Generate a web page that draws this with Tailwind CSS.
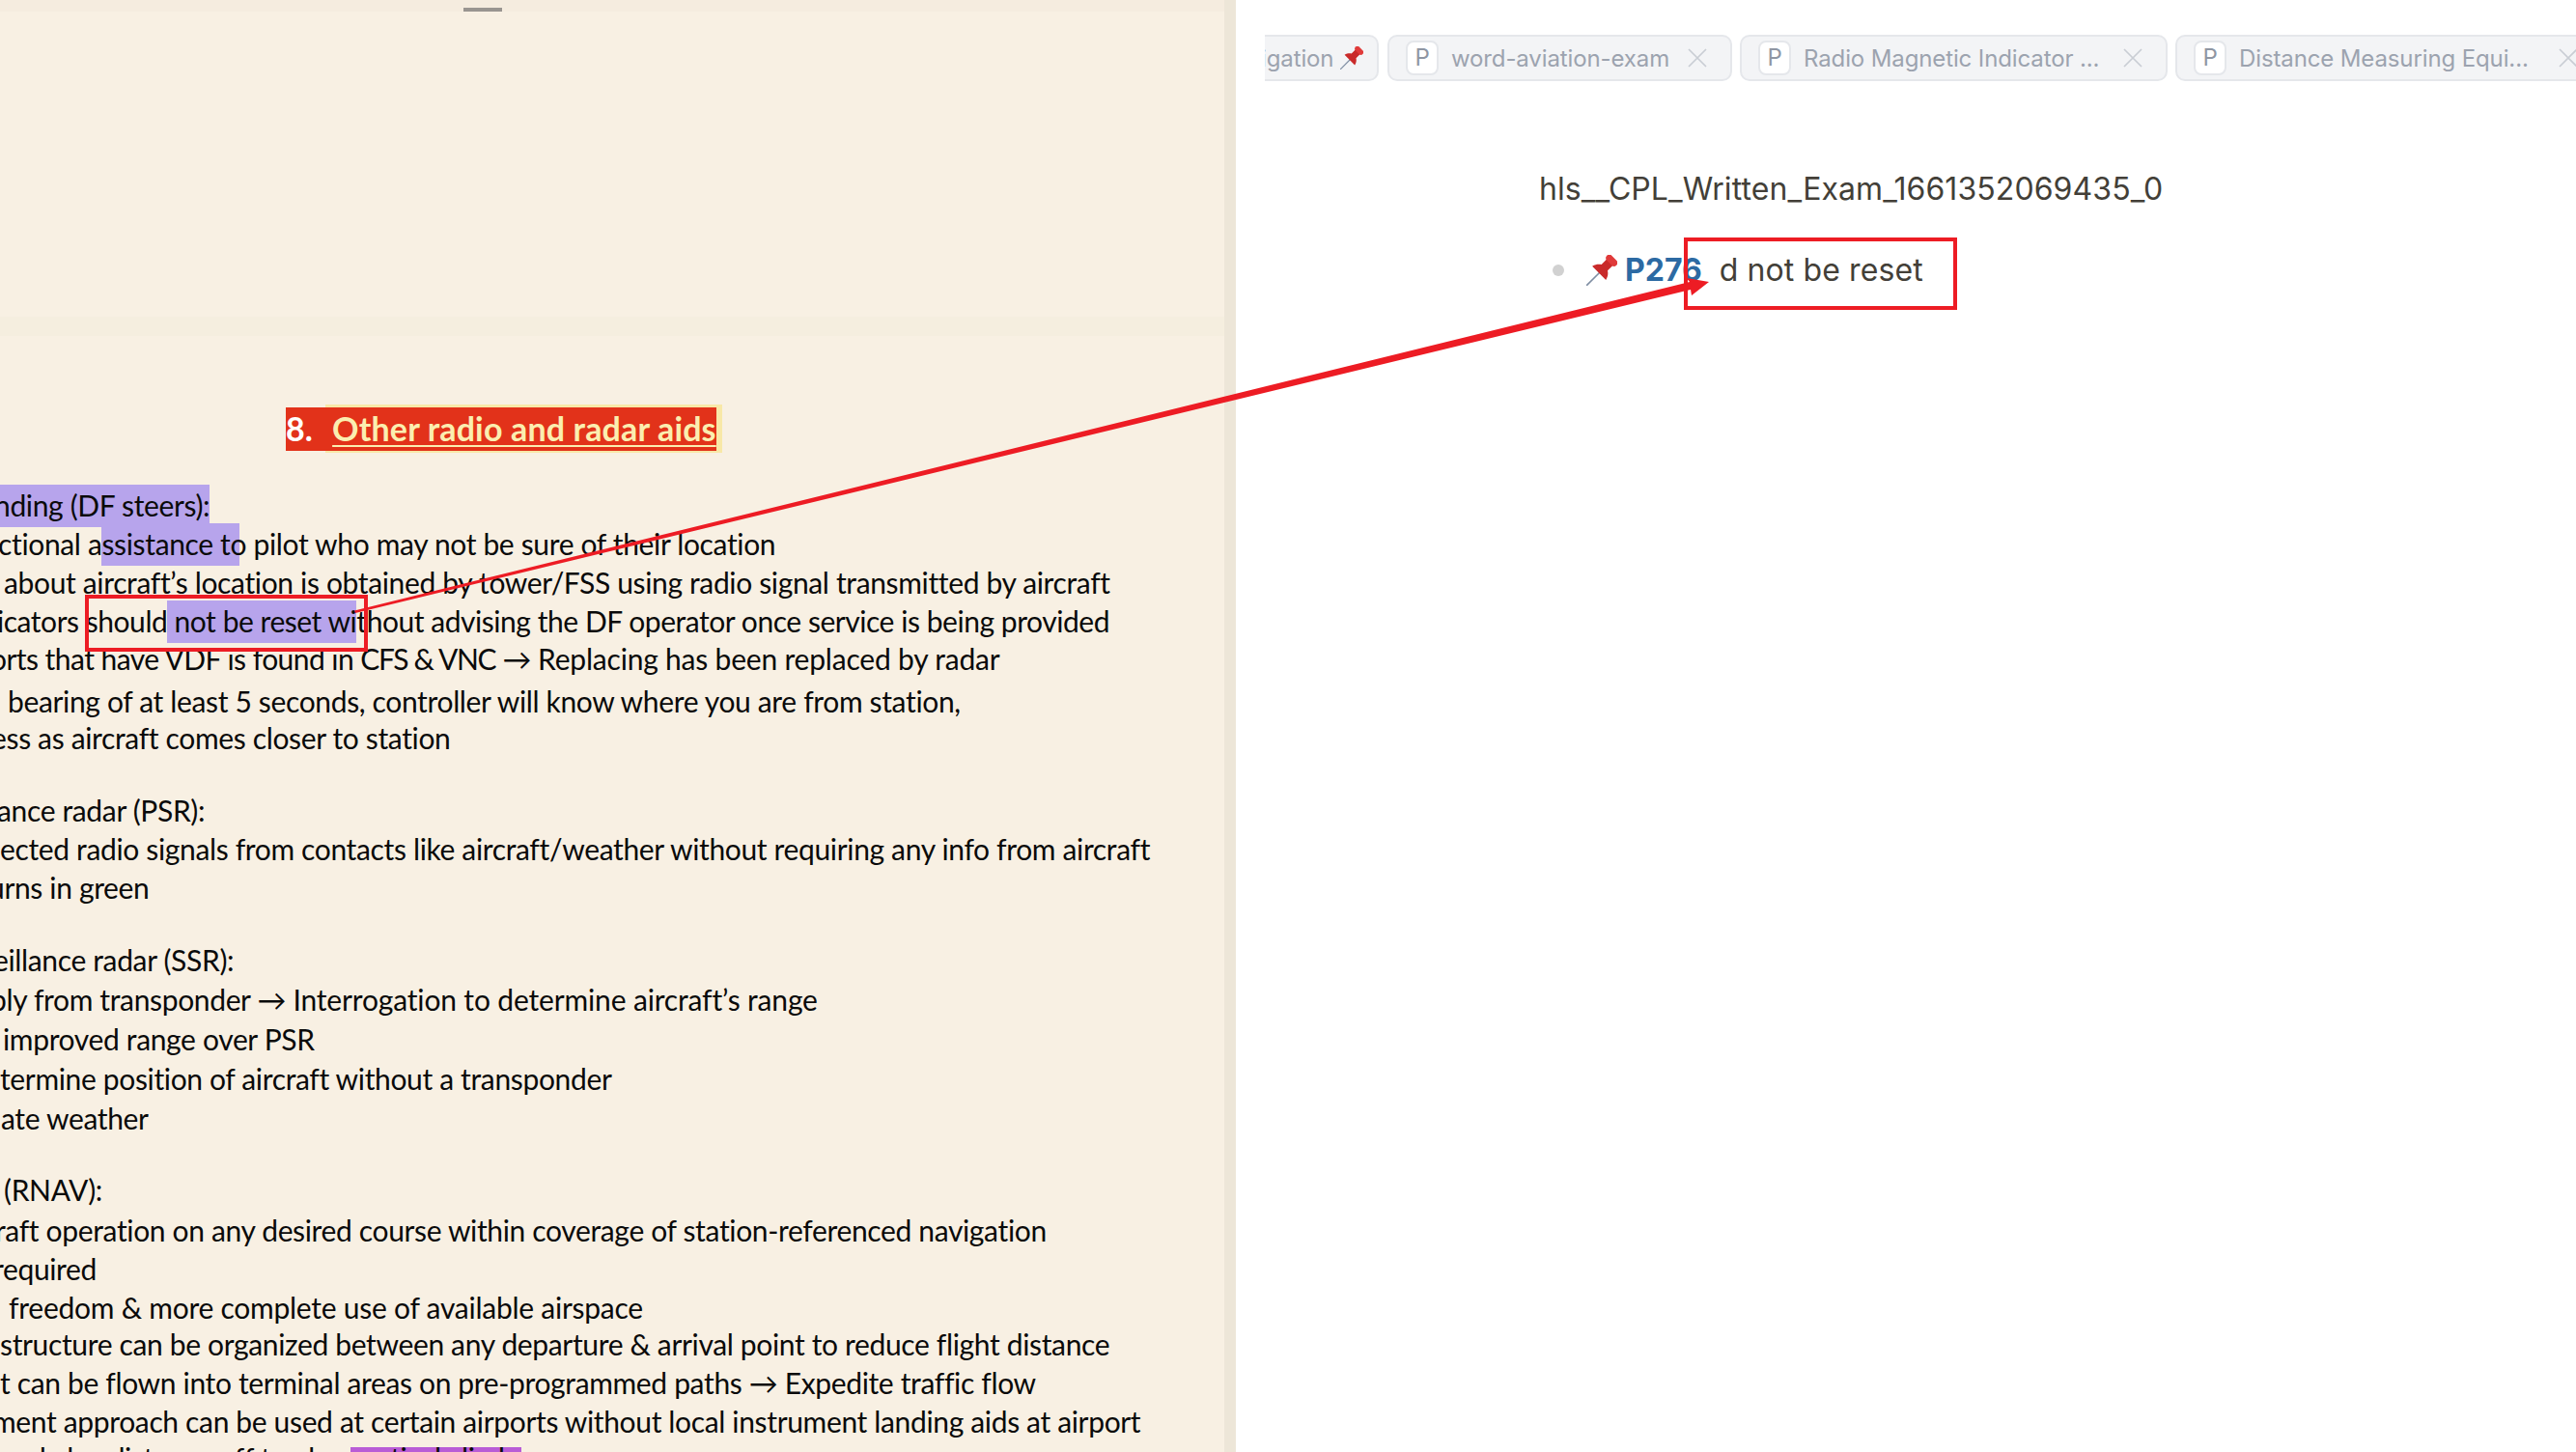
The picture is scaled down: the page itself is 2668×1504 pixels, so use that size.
<!DOCTYPE html>
<html>
<head>
<meta charset="utf-8">
<script src="https://cdn.jsdelivr.net/npm/@tailwindcss/browser@4"></script>
</head>
<body class="bg-white">
<div class="relative flex w-[2668px] h-[1504px] overflow-hidden bg-white">
  <!-- left PDF pane -->
  <section class="relative w-[1280px] h-[1504px] shrink-0 overflow-hidden bg-[#f8f0e3] border-r-[12px] border-[#ede6d8] font-['Lato'] text-[30px] tracking-[-0.35px] text-[#0a0a0a] whitespace-nowrap">
    <div class="h-[12px] bg-[#f5ecdf]"><div class="ml-[480px] pt-[8px] w-[40px]"><div class="h-[4px] bg-[#999590]"></div></div></div>
    <div class="mt-[316px] h-[20px] bg-[#f5eedf]"></div>
    <div class="relative mt-[74px] ml-[296px] w-[446px] h-[45px]">
      <div class="absolute left-[41px] top-[-3px] w-[411px] h-[50px] bg-[#f8e8a8]"></div>
      <div class="relative flex items-center h-[45px] pb-[2px] bg-[#e2321a] font-bold text-[34px] leading-[43px] tracking-[0.15px]">
        <span class="text-white">8.</span>
        <span class="ml-[20px] text-[#fbeeb0] underline decoration-[#fbeeb0] decoration-2 underline-offset-[4px]">Other radio and radar aids</span>
      </div>
    </div>
    <div class="mt-[36px] leading-[40px]">
      <div class="h-[40px] ml-[-6px]"><span class="bg-[#b7a4ec] pt-[3px] pb-[5px]">nding (DF steers):</span></div>
      <div class="h-[40px] ml-[-2px]">ctional a<span class="bg-[#b7a4ec] pt-[3px] pb-[5px] pr-[9px] mr-[-9px]">ssistance t</span>o pilot who may not be sure of their location</div>
      <div class="h-[40px] ml-[4px]">about aircraft’s location is obtained by tower/FSS using radio signal transmitted by aircraft</div>
      <div class="h-[39px] ml-[-3px] tracking-[-0.46px]">icators should<span class="bg-[#b7a4ec] pt-[3px] pb-[5px]"> not be reset wi</span>thout advising the DF operator once service is being provided</div>
      <div class="h-[44px] ml-[-10px] tracking-[-0.55px]">orts that have VDF is found in <span class="tracking-[-1.3px]">CFS &amp; VNC</span> → <span class="tracking-[-0.2px]">Replacing has been replaced by radar</span></div>
      <div class="h-[38px] ml-[8px]">bearing of at least 5 seconds, controller will know where you are from station,</div>
      <div class="h-[75px] ml-[-9px]">ess as aircraft comes closer to station</div>
      <div class="h-[40px] ml-[-3px]">ance radar (PSR):</div>
      <div class="h-[40px]">ected radio signals from contacts like aircraft/weather without requiring any info from aircraft</div>
      <div class="h-[75px] ml-[-12px]">urns in green</div>
      <div class="h-[41px] ml-[-7px]">eillance radar (SSR):</div>
      <div class="h-[41px] ml-[-10px]">ply from transponder → <span class="tracking-[-0.15px]">Interrogation to determine aircraft’s range</span></div>
      <div class="h-[41px] ml-[3px]">improved range over PSR</div>
      <div class="h-[41px]">termine position of aircraft without a transponder</div>
      <div class="h-[74px] ml-[1px]">ate weather</div>
      <div class="h-[42px] ml-[4px]">(RNAV):</div>
      <div class="h-[40px] ml-[-5px]">raft operation on any desired course within coverage of station-referenced navigation</div>
      <div class="h-[40px] ml-[-7px]">required</div>
      <div class="h-[38px] ml-[9px] tracking-[-0.25px]">freedom &amp; more complete use of available airspace</div>
      <div class="h-[40px]">structure can be organized between any departure &amp; arrival point to reduce flight distance</div>
      <div class="h-[40px]">t can be flown into terminal areas on pre-programmed paths → Expedite traffic flow</div>
      <div class="h-[38px] ml-[-8px]">ment approach can be used at certain airports without local instrument landing aids at airport</div>
      <div class="h-[40px]">and also distance off track <span class="ml-[22px] pr-[8px] bg-linear-to-b from-transparent from-[7px] to-[#b95cd6] to-[7px]">vertical climb</span></div>
    </div>
  </section>

  <!-- right note pane -->
  <section class="flex-1 min-w-0 overflow-hidden font-['Inter']">
    <div class="flex gap-[8px] mt-[36px] ml-[30px] h-[48px] text-[24px] tracking-[-0.12px] text-[#9ca3af] whitespace-nowrap">
      <div class="flex items-center shrink-0 w-[118px] mr-[1px] overflow-hidden bg-[#f3f4f6] border-2 border-l-0 border-[#e5e7eb] rounded-r-[10px]">
        <span class="ml-[-4px] pt-[2px]">igation</span>
        <svg class="ml-[7px] w-[24px] h-[24px] shrink-0" viewBox="0 0 32 32"><g transform="rotate(45 16 16)"><path d="M16 17V40" stroke="#7f8ea3" stroke-width="1.6"/><path d="M6 20C7 15 10 13 11.500 12V4H20.500V12C22 13 25 15 26 20Z" fill="#c92a2a"/><rect x="9" y="-2" width="14" height="7" rx="3.500" fill="#e03a3a"/></g></svg>
      </div>
      <div class="flex items-center shrink-0 w-[357px] pl-[17px] bg-[#f3f4f6] border-2 border-[#e5e7eb] rounded-[10px]">
        <span class="flex items-center justify-center shrink-0 w-[34px] h-[36px] bg-white border-2 border-[#e5e7eb] rounded-[8px] text-[#8f96a3]">P</span>
        <span class="ml-[13px] pt-[2px] w-[245px] overflow-hidden">word-aviation-exam</span>
        <svg class="w-[20px] h-[20px] shrink-0" viewBox="0 0 20 20"><path d="M1 1L19 19M19 1L1 19" stroke="#c9cdd4" stroke-width="1.700"/></svg>
      </div>
      <div class="flex items-center shrink-0 w-[443px] pl-[17px] bg-[#f3f4f6] border-2 border-[#e5e7eb] rounded-[10px]">
        <span class="flex items-center justify-center shrink-0 w-[34px] h-[36px] bg-white border-2 border-[#e5e7eb] rounded-[8px] text-[#8f96a3]">P</span>
        <span class="ml-[13px] pt-[2px] w-[331px] overflow-hidden">Radio Magnetic Indicator ...</span>
        <svg class="w-[20px] h-[20px] shrink-0" viewBox="0 0 20 20"><path d="M1 1L19 19M19 1L1 19" stroke="#c9cdd4" stroke-width="1.700"/></svg>
      </div>
      <div class="flex items-center shrink-0 w-[443px] pl-[17px] bg-[#f3f4f6] border-2 border-[#e5e7eb] rounded-[10px]">
        <span class="flex items-center justify-center shrink-0 w-[34px] h-[36px] bg-white border-2 border-[#e5e7eb] rounded-[8px] text-[#8f96a3]">P</span>
        <span class="ml-[13px] pt-[2px] w-[331px] overflow-hidden">Distance Measuring Equi...</span>
        <svg class="w-[20px] h-[20px] shrink-0" viewBox="0 0 20 20"><path d="M1 1L19 19M19 1L1 19" stroke="#c9cdd4" stroke-width="1.700"/></svg>
      </div>
    </div>
    <h1 class="mt-[89px] ml-[314px] text-[32px] leading-[46px] tracking-[0.08px] text-[#433f38]">hls__CPL_Written_Exam_1661352069435_0</h1>
    <div class="flex items-center mt-[41px] ml-[328px] h-[40px] text-[32px] text-[#433f38]">
      <span class="w-[12px] h-[12px] rounded-full bg-[#d1d1d1] shrink-0"></span>
      <svg class="ml-[23px] w-[32px] h-[32px] shrink-0" viewBox="0 0 32 32"><g transform="rotate(45 16 16)"><path d="M16 17V40" stroke="#7f8ea3" stroke-width="1.6"/><path d="M6 20C7 15 10 13 11.500 12V4H20.500V12C22 13 25 15 26 20Z" fill="#c92a2a"/><rect x="9" y="-2" width="14" height="7" rx="3.500" fill="#e03a3a"/></g></svg>
      <span class="ml-[8px] font-bold text-[#2c6aa3]">P276</span>
      <span class="ml-[18px] tracking-[0.1px]">d not be reset</span>
    </div>
  </section>

  <!-- annotation overlays -->
  <div class="absolute left-[88px] top-[616px] w-[293px] h-[59px] border-4 border-[#ed1c24]"></div>
  <div class="absolute left-[1744px] top-[246px] w-[283px] h-[75px] border-4 border-[#ed1c24]"></div>
  <svg class="absolute left-0 top-0 w-[2668px] h-[1504px] pointer-events-none" viewBox="0 0 2668 1504">
    <polygon fill="#ed1c24" points="367,632.500 1750,292 1747,288 1770,292 1752,306 1751,300 368,635"/>
  </svg>
</div>
</body>
</html>
